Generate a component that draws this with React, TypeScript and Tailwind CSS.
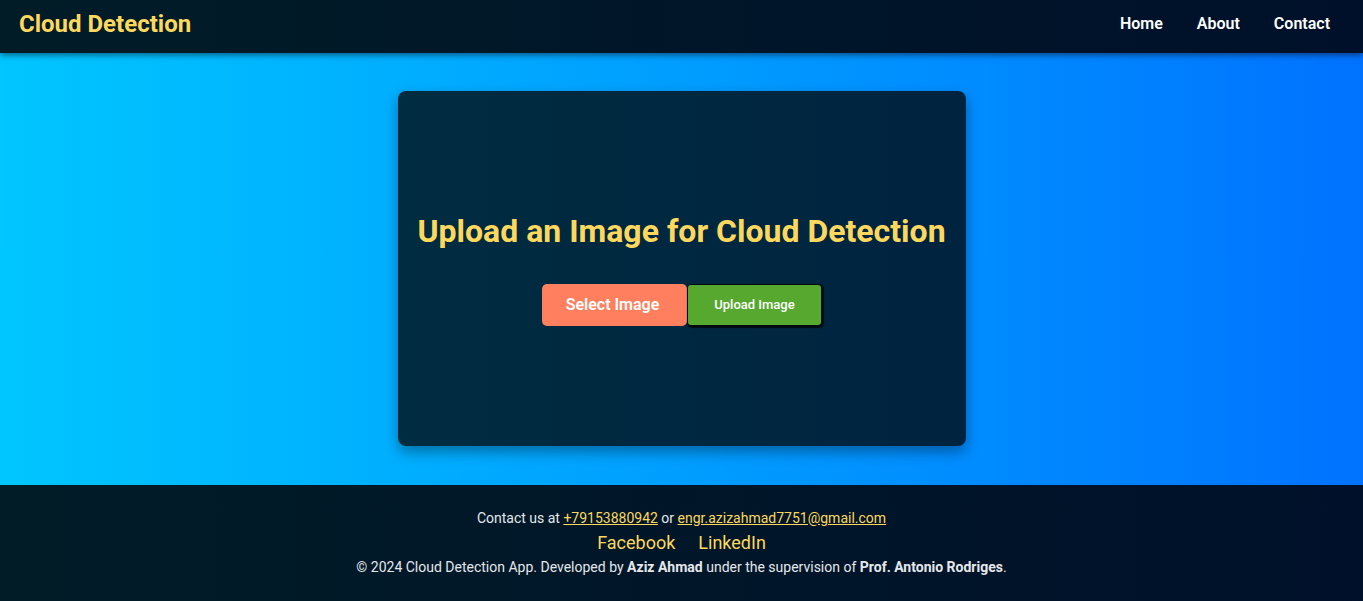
export default function App() {
  return (
    <div className="min-h-[601px] flex flex-col" style={{ fontFamily: 'Roboto, "Liberation Sans", sans-serif' }}>
      <header className="h-[53px] flex items-center justify-between pl-[19px] pr-[33px] pb-[6px] bg-gradient-to-r from-[#011c27] to-[#00102a] shadow-[0_2px_6px_rgba(0,0,0,0.5)] relative z-10">
        <div className="text-[24px] font-bold text-[#fdd85d] leading-none">Cloud Detection</div>
        <nav className="flex gap-[34px] text-[16px] font-semibold text-white">
          <a>Home</a>
          <a>About</a>
          <a>Contact</a>
        </nav>
      </header>
      <main className="h-[432px] bg-gradient-to-r from-[#00c6ff] to-[#0072ff] flex justify-center pt-[38px]">
        <div className="w-[568px] h-[355px] rounded-[8px] bg-black/75 shadow-[0_6px_14px_rgba(0,0,0,0.35)] flex flex-col items-center justify-center">
          <h1 className="text-[32px] font-bold text-[#fdd85d] leading-[38px] mb-[34px]">Upload an Image for Cloud Detection</h1>
          <div className="flex items-center">
            <button className="h-[42px] w-[145px] rounded-[5px] bg-[#ff7f5e] text-white text-[16px] font-semibold pr-[4px]">Select Image</button>
            <button className="h-[40px] w-[133px] ml-px rounded-[3px] bg-[#57a82f] text-white text-[13px] font-medium shadow-[1px_1px_1px_2px_rgba(0,0,0,0.75)]">Upload Image</button>
          </div>
        </div>
      </main>
      <footer className="flex-1 bg-gradient-to-r from-[#011c27] to-[#00102a] flex flex-col items-center pt-[23px] text-[14px] text-[#e5e7eb]">
        <p className="leading-[20px]">
          Contact us at <a className="text-[#fdd85d] underline">+79153880942</a> or{" "}
          <a className="text-[#fdd85d] underline">engr.azizahmad7751@gmail.com</a>
        </p>
        <div className="flex gap-[23px] text-[18px] text-[#fdd85d] leading-[28px] mt-[1px]">
          <a>Facebook</a>
          <a>LinkedIn</a>
        </div>
        <p className="leading-[20px] mt-0">
          © 2024 Cloud Detection App. Developed by <strong className="font-bold">Aziz Ahmad</strong> under the supervision of{" "}
          <strong className="font-bold">Prof. Antonio Rodriges</strong>.
        </p>
      </footer>
    </div>
  );
}
